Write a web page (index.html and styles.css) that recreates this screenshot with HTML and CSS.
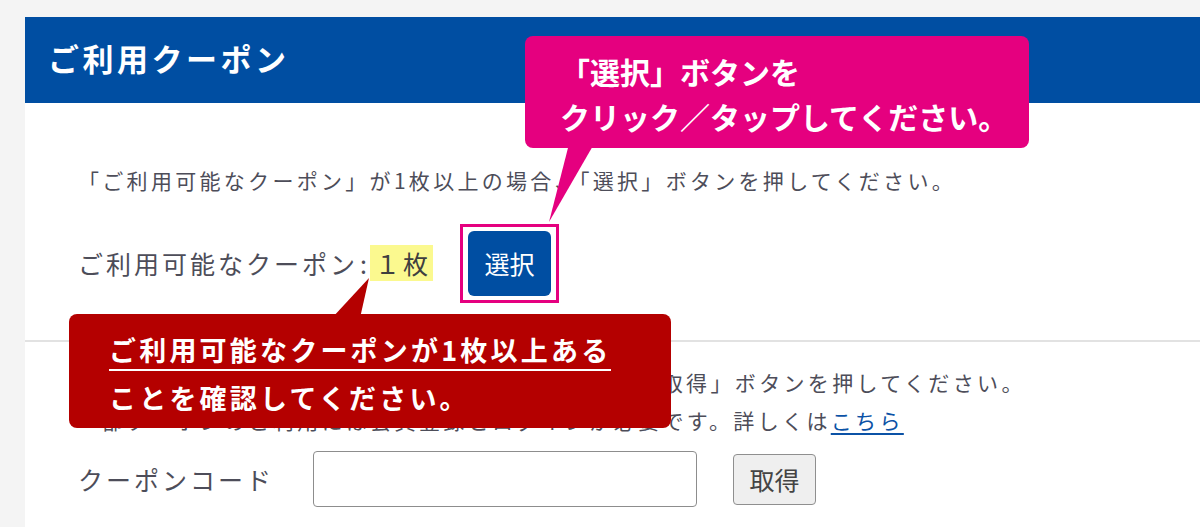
FILE: index.html
```html
<!DOCTYPE html>
<html lang="ja">
<head>
<meta charset="utf-8">
<title>ご利用クーポン</title>
<link rel="stylesheet" href="styles.css">
</head>
<body>
<div class="page">
  <div class="card">
    <h1 class="card-title">ご利用クーポン</h1>
    <section class="sec-select">
      <p class="note">「ご利用可能なクーポン」が1枚以上の場合、「選択」ボタンを押してください。</p>
      <div class="count-row">
        <span class="label">ご利用可能なクーポン</span><span class="colon">:</span><span class="count">１枚</span>
        <span class="focus-frame"><button class="btn-select" type="button">選択</button></span>
      </div>
    </section>
    <section class="sec-code">
      <p class="note2">クーポンコードをお持ちの方は、コードを入力して「取得」ボタンを押してください。<br>一部クーポンのご利用には会員登録とログインが必要です。詳しくは<a href="#">こちら</a></p>
      <div class="code-row">
        <span class="code-label">クーポンコード</span>
        <input class="code-input" type="text">
        <button class="btn-get" type="button">取得</button>
      </div>
    </section>
  </div>

  <div class="callout callout-pink">
    <svg class="tail" width="1" height="1"><polygon points="44,108 69,108 24,186" fill="#e5007f"/></svg>
    <div class="pink-text">「選択」ボタンを<br>クリック／タップしてください。</div>
  </div>

  <div class="callout callout-red">
    <svg class="tail" width="1" height="1"><polygon points="263,4 291,4 300,-36" fill="#b40000"/></svg>
    <span class="red-line1">ご利用可能なクーポンが1枚以上ある</span>
    <span class="red-line2">ことを確認してください。</span>
  </div>
</div>
</body>
</html>
```

FILE: styles.css
```css
* { box-sizing: border-box; margin: 0; padding: 0; }
html, body { width: 1200px; height: 527px; overflow: hidden; }
body {
  background: #f4f4f4;
  font-family: "Noto Sans CJK JP", "Noto Sans", sans-serif;
  color: #4d4d59;
}
.page { position: relative; width: 1200px; height: 527px; padding: 17px 0 0 25px; }
.card { background: #fff; width: 1200px; height: 600px; }

.card-title {
  height: 86px;
  background: #004ea2;
  color: #fff;
  font-size: 31px;
  font-weight: 700;
  letter-spacing: 3.5px;
  padding: 0 0 6px 23px;
  display: flex;
  align-items: center;
}

.sec-select { padding: 61px 0 37px 53px; }
.note { font-size: 21px; letter-spacing: 3.3px; line-height: 32px; white-space: nowrap; }

.count-row { display: flex; align-items: center; margin-top: 27px; height: 80px; }
.label, .colon { font-size: 25px; letter-spacing: 3px; line-height: 36px; }
.colon { padding-left: 2px; }
.count {
  font-size: 25px;
  letter-spacing: 3px;
  line-height: 36px;
  background: #fbf98f;
  padding: 0 2px 0 5px;
  color: #3f3f3f;
}
.focus-frame {
  display: flex;
  margin-left: 27px;
  border: 3px solid #e5007f;
  padding: 4px 5px;
}
.btn-select {
  width: 83px;
  height: 65px;
  border: none;
  border-radius: 6px;
  background: #004ea2;
  color: #fff;
  font-family: inherit;
  font-size: 25px;
}

.sec-code { border-top: 2px solid #e2e2e2; padding: 21px 0 0 53px; }
.note2 { font-size: 21px; letter-spacing: 3.35px; line-height: 38px; white-space: nowrap; }
.note2 a { color: #0b52a6; text-decoration: underline; text-underline-offset: 4px; }

.code-row { display: flex; align-items: center; margin-top: 12px; }
.code-label { width: 235px; font-size: 25px; letter-spacing: 3px; }
.code-input {
  width: 384px;
  height: 56px;
  border: 1px solid #8d8d8d;
  border-radius: 4px;
  background: #fff;
}
.btn-get {
  margin-left: 36px;
  width: 83px;
  height: 51px;
  background: #efefef;
  border: 1px solid #8f8f8f;
  border-radius: 4px;
  font-family: inherit;
  font-size: 25px;
  color: #444;
}

.callout { position: absolute; color: #fff; font-weight: 700; border-radius: 8px; }
.tail { position: absolute; left: 0; top: 0; overflow: visible; }

.callout-pink {
  left: 525px; top: 36px; width: 504px; height: 112px;
  background: #e5007f;
  padding: 13px 0 0 35px;
}
.pink-text { position: relative; font-size: 30px; line-height: 45px; white-space: nowrap; }

.callout-red {
  left: 69px; top: 314px; width: 602px; height: 114px;
  background: #b40000;
  padding: 17px 0 0 40px;
  font-size: 27px;
  letter-spacing: 3.2px;
  display: flex;
  flex-direction: column;
  align-items: flex-start;
}
.red-line1 { position: relative; line-height: 38px; border-bottom: 2px solid #fff; white-space: nowrap; }
.red-line2 { position: relative; line-height: 38px; margin-top: 8px; white-space: nowrap; }
```
